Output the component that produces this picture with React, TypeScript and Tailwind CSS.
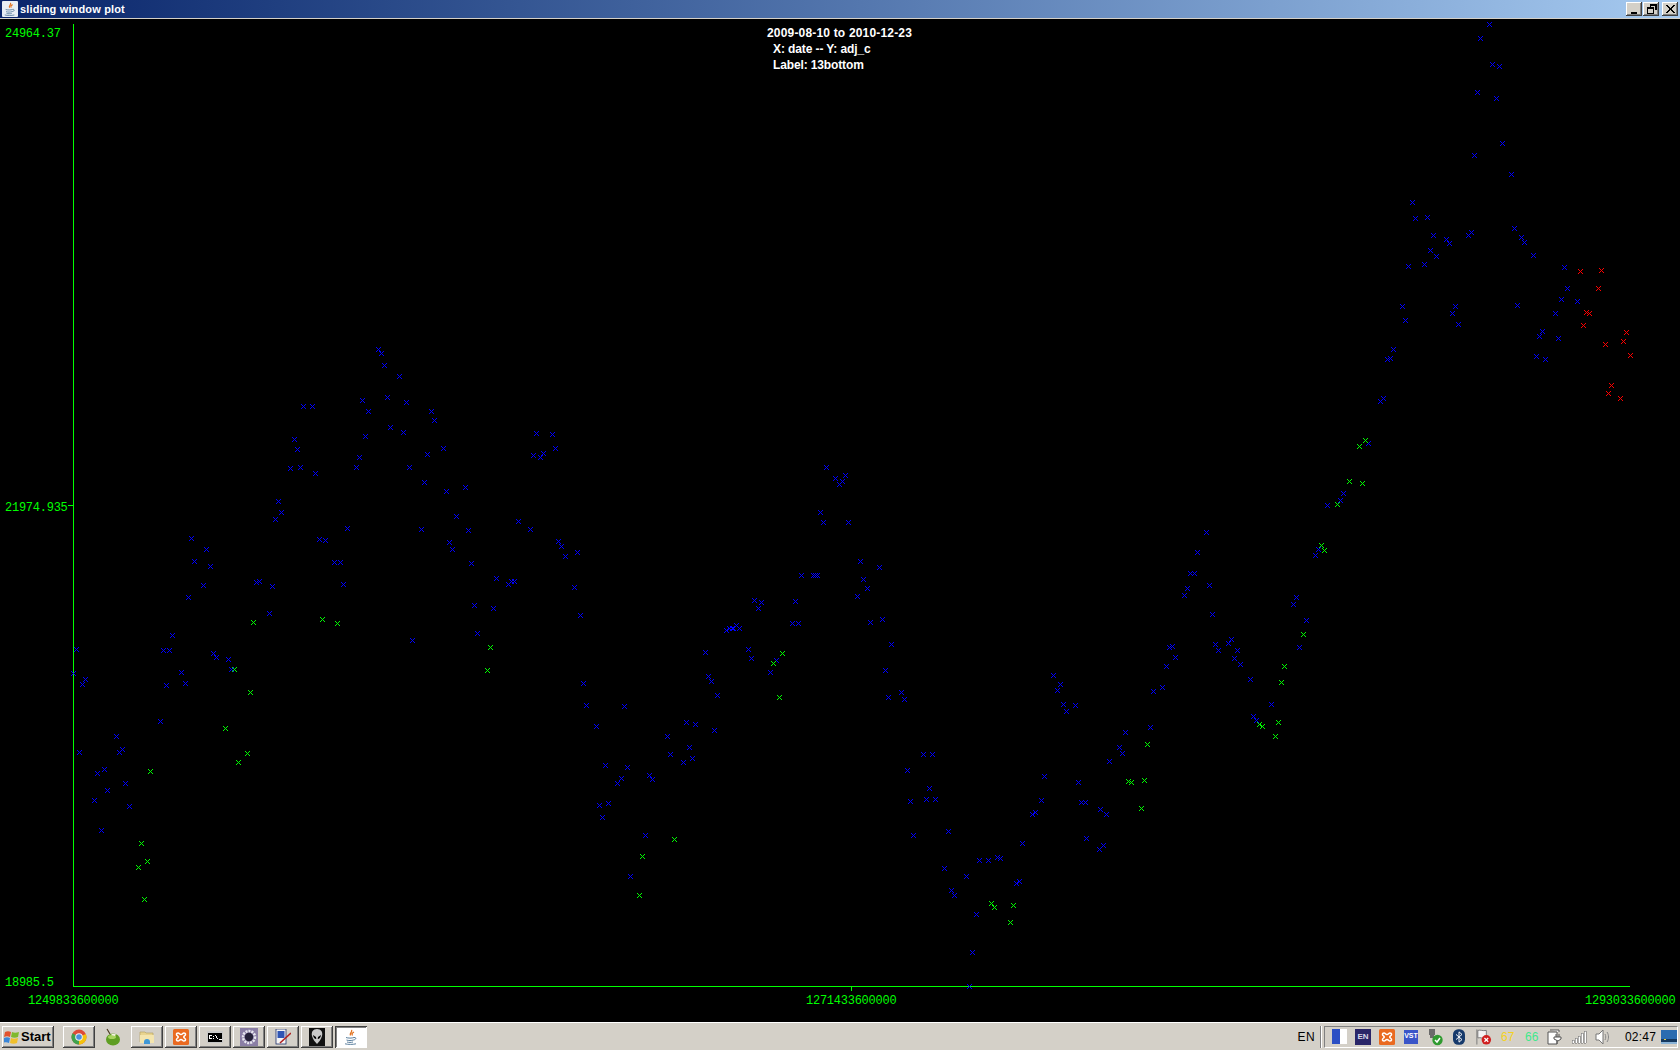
import React from 'react';

type Pt = [number, number];

const mono = "font-['Liberation_Mono',monospace]";
const sans = "font-['Liberation_Sans',Arial,sans-serif]";
const bevel = 'shadow-[inset_-1px_-1px_0_#404040,inset_1px_1px_0_#ffffff,inset_-2px_-2px_0_#808080]';

const xs = (ox: number, oy: number, sy: number, raw: number[]): Pt[] => {
  const out: Pt[] = [];
  for (let i = 0; i < raw.length; i += 2) {
    out.push([Math.floor(ox + raw[i] / 3), Math.floor(oy + raw[i + 1] / sy)]);
  }
  return out;
};

const blue: Pt[] = [
  ...xs(70, 340, 2.703, [
    926,26,935,36,944,69,989,99,878,163,953,155,1010,169,896,193,1085,193,1094,217,962,236,1001,250,887,260,1121,293,869,317,1073,309,860,344,1019,344,1064,384,1130,409,1187,398,701,180,728,180,674,268,683,295,662,347,692,344,737,360,626,436,635,466,617,485,833,509,749,539,767,541,1160,476,1055,512,1196,514,1139,547,1148,566,1346,490,1382,512,1466,545,1475,557,1487,585,1205,604,365,536,410,566,374,599,422,612,794,601,812,601,558,655,569,653,608,666,401,663,356,695,821,660,1280,644,1316,660,1325,652,1334,652,1214,718,1271,725,599,739,1223,793,1028,812,308,798,281,839,299,839,431,848,440,858,476,864,485,890,335,899,347,929,290,934,19,836,10,901,46,918,37,931,272,1031,140,1072,158,1107,149,1115,29,1115,104,1160,83,1172,167,1199,113,1218,74,1244,179,1261,95,1326,1400,253,1448,255,1457,293,1421,307,1391,312,1412,317,
  ]),
  ...xs(570, 450, 2.904, [
    770,50,797,82,827,74,818,92,809,100,752,181,761,210,836,210,872,324,929,341,881,376,893,402,863,425,902,500,938,492,965,564,947,640,956,718,995,704,1004,724,695,364,731,364,737,364,743,364,554,437,575,443,566,460,677,440,668,504,686,504,470,524,479,518,488,518,491,518,500,510,509,518,407,588,536,579,545,605,620,611,602,646,416,657,425,672,443,712,41,678,50,742,164,744,80,802,350,791,377,797,434,814,293,832,359,864,302,884,368,896,341,907,107,916,173,922,239,945,248,957,155,954,143,968,89,1032,116,1026,98,1067,227,1119,182,1238,23,297,14,399,32,480,1061,884,1088,884,1013,930,1079,983,1022,1020,1070,1014,1097,1014,1031,1119,1136,1108,1124,1214,1190,1238,1145,1279,1154,1293,1229,1192,1256,1192,1283,1184,1292,1186,1358,1142,1340,1258,1349,1253,1388,1058,1397,1052,1415,1017,1424,948,1451,654,1472,680,1463,698,1481,739,1490,759,1220,1348,1208,1459,1199,1558,
  ]),
  ...xs(1070, 420, 3, [
    409,338,382,398,361,460,373,460,418,496,352,506,343,526,427,583,298,681,307,680,316,712,289,739,277,802,250,814,16,856,241,922,166,937,148,982,157,1000,118,1024,25,1087,34,1147,46,1147,91,1168,109,1183,436,674,445,691,475,670,484,659,502,691,493,715,511,733,541,778,604,853,550,890,559,901,688,682,709,601,670,553,679,532,736,406,745,388,772,256,811,241,820,220,895,70,
  ]),
  ...xs(1300, 18, 3, [
    568,19,541,61,577,139,598,145,532,223,589,241,607,376,523,412,634,469,337,553,346,601,382,598,400,652,439,664,448,676,505,652,514,643,643,631,664,658,673,673,700,712,391,697,409,715,373,739,325,745,793,748,802,811,784,844,832,850,766,886,652,862,307,865,466,865,457,886,316,907,475,919,727,940,718,955,775,961,280,994,262,1023,271,1021,709,1015,736,1024,250,1141,241,1150,
  ]),
  [1086, 838], [1099, 849], [1103, 845],
];

const green: Pt[] = [
  ...xs(70, 340, 2.703, [551,763,758,755,803,766,1262,831,1253,893,494,890,542,953,467,1050,533,1118,506,1142,242,1166,215,1361,233,1410,206,1426,224,1513]),
  ...xs(570, 450, 2.904, [638,591,611,620,629,718,314,1131,218,1181,209,1294,1265,1317,1274,1328,1331,1322,1322,1372]),
  ...xs(1070, 420, 3, [886,60,868,79,838,184,877,190,802,253,754,376,763,391,700,643,643,739,634,787,625,907,568,913,577,919,616,949,232,973,175,1085,184,1087,223,1081,214,1165]),
];

const red: Pt[] = xs(1300, 18, 3, [841,760,904,757,895,811,859,883,868,886,850,922,979,943,970,970,916,979,991,1012,934,1102,925,1126,961,1141]);

// 5x5 pixel cross, same as the plot's point marker
const crossPath = (pts: Pt[]) => {
  const cells: Pt[] = [[-2,-2],[2,-2],[-1,-1],[1,-1],[0,0],[-1,1],[1,1],[-2,2],[2,2]];
  return pts.map(([x, y]) => cells.map(([a, b]) => `M${x + a} ${y + b}h1v1h-1z`).join('')).join('');
};

const AxisLabel = ({ className, children }: { className: string; children: React.ReactNode }) => (
  <span className={`absolute ${mono} text-[12px] leading-[14px] tracking-[-0.25px] text-[#00ff00] ${className}`}>{children}</span>
);

const Plot = () => (
  <div className="relative flex-1 bg-black overflow-hidden">
    <svg className="absolute left-0 top-0" width={1680} height={1003} viewBox="0 19 1680 1003" shapeRendering="crispEdges">
      <path d="M73 24h1v962h1556v1H73z" fill="#00ff00" />
      <path d="M68 505h5v1h-5zM851 987h1v4h-1z" fill="#00ff00" />
      <path d={crossPath(blue)} fill="#0000ff" />
      <path d={crossPath(green)} fill="#00ff00" />
      <path d={crossPath(red)} fill="#ff0000" />
    </svg>
    <AxisLabel className="left-[5px] top-[8px]">24964.37</AxisLabel>
    <AxisLabel className="left-[5px] top-[482px]">21974.935</AxisLabel>
    <AxisLabel className="left-[5px] top-[957px]">18985.5</AxisLabel>
    <AxisLabel className="left-[28px] top-[975px]">1249833600000</AxisLabel>
    <AxisLabel className="left-[806px] top-[975px]">1271433600000</AxisLabel>
    <AxisLabel className="left-[1585px] top-[975px]">1293033600000</AxisLabel>
    <div className={`absolute left-[767px] top-[6px] ${sans} text-[12px] leading-[16px] text-white font-bold whitespace-pre`}>
      <div className="tracking-[0.18px]">2009-08-10 to 2010-12-23</div>
      <div className="pl-[6px] tracking-[-0.1px]">X: date -- Y: adj_c</div>
      <div className="pl-[6px] tracking-[-0.13px]">Label: 13bottom</div>
    </div>
  </div>
);

const JavaIcon = ({ size = 16 }: { size?: number }) => (
  <svg width={size} height={size} viewBox="0 0 16 16">
    <path d="M8.500 1c1.500 2-2.500 3-1 5.500M11 3c-2 1-2.500 2-1.500 3.500" stroke="#e2711d" strokeWidth="1.300" fill="none" />
    <path d="M3 8.500c2 .8 6 .8 8 0M3.500 11c2 .7 5 .7 7 0M4 13c2 .6 4 .6 6 0M2 14.800c3 .8 8 .8 11 0M11 8.500c2.500-.5 2.500 2-.5 2.500" stroke="#5b7f9e" strokeWidth="1" fill="none" />
  </svg>
);

const TitleBar = () => (
  <div className="h-[19px] shrink-0 border-b border-[#d4d0c8] bg-gradient-to-r from-[#0a246a] to-[#a6caf0] flex items-center pl-[2px] pr-[2px]">
    <div className="w-4 h-4 bg-[#e8edf4] flex items-center justify-center rounded-[1px]">
      <JavaIcon size={14} />
    </div>
    <span className={`ml-[2px] ${sans} text-[11px] leading-none font-bold tracking-[0.15px] text-white`}>sliding window plot</span>
    <div className="ml-auto flex items-center">
      <CaptionButton className="mr-[1px]">
        <path d="M3 9h6v2H3z" fill="#000" />
      </CaptionButton>
      <CaptionButton className="mr-[3px]">
        <path d="M5 1h7v6h-2V3H6v1H5zM2 4h7v7H2zm1 2v4h5V6z" fill="#000" fillRule="evenodd" />
      </CaptionButton>
      <CaptionButton className="">
        <path d="M3 2l3 3 3-3h2L7 6l4 4H9L6 7l-3 3H1l4-4-4-4z" fill="#000" />
      </CaptionButton>
    </div>
  </div>
);

const CaptionButton = ({ className, children }: { className: string; children: React.ReactNode }) => (
  <div className={`w-4 h-[14px] bg-[#d4d0c8] ${bevel} flex items-center justify-center ${className}`}>
    <svg width={13} height={12} viewBox="0 0 13 12" shapeRendering="crispEdges">{children}</svg>
  </div>
);

const TaskButton = ({ children }: { children: React.ReactNode }) => (
  <div className={`w-[32px] h-[22px] bg-[#d4d0c8] ${bevel} flex items-center justify-center`}>{children}</div>
);

const Xampp = () => (
  <svg className="shrink-0" width={16} height={16} viewBox="0 0 16 16">
    <rect width="16" height="16" rx="1.500" fill="#ea6a20" />
    <path d="M5 4c-2 0-2 2-.5 3 1 .5 1 1.500 0 2-1.500 1-1.500 3 .5 3 1.500 0 1.500-1.500 3-1.500s1.500 1.500 3 1.500c2 0 2-2 .5-3-1-.5-1-1.500 0-2 1.500-1 1.500-3-.5-3-1.500 0-1.500 1.500-3 1.500S6.500 4 5 4z" fill="none" stroke="#ffffff" strokeWidth="1.500" />
  </svg>
);

const Chrome = () => (
  <svg width={16} height={16} viewBox="0 0 16 16">
    <circle cx="8" cy="8" r="7.500" fill="#dd4b39" />
    <path d="M8 8L1.500 4.200A7.500 7.500 0 0 0 8 15.500z" fill="#3fa34d" />
    <path d="M8 8l6.900-3A7.500 7.500 0 0 1 8 15.500z" fill="#f4c20d" />
    <circle cx="8" cy="8" r="3.800" fill="#f0f0f0" />
    <circle cx="8" cy="8" r="2.800" fill="#4a8fe0" />
  </svg>
);

const Melon = () => (
  <svg width={16} height={18} viewBox="0 0 16 18">
    <ellipse cx="8" cy="11.500" rx="7" ry="6" fill="#5f9e22" />
    <ellipse cx="7" cy="9" rx="4" ry="2" fill="#a7d45f" />
    <path d="M6 7c1-1.500 3-1.500 5-.5l-1 1.500z" fill="#f4f2e2" />
    <path d="M2 1l3 5" stroke="#4b3a20" strokeWidth="1.200" />
  </svg>
);

const Folder = () => (
  <svg width={16} height={16} viewBox="0 0 16 16">
    <path d="M1 3h5l1 1h7v9H1z" fill="#e9d48e" stroke="#b8a465" strokeWidth=".7" />
    <path d="M1 6h14v8H1z" fill="#f4e5ae" />
    <path d="M5 15v-2a3 3 0 0 1 6 0v2z" fill="#3f97d6" />
  </svg>
);

const Cmd = () => (
  <svg width={16} height={12} viewBox="0 0 16 12" shapeRendering="crispEdges">
    <rect width="16" height="12" fill="#c8c8c8" />
    <rect x="1" y="2" width="14" height="9" fill="#000" />
    <path d="M2 4h3v1H3v2h2v1H2zM6 5h1v1H6zM6 7h1v1H6zM8 4h1v1h1v2h1v1h-1V7H9V5H8zM12 8h3v1h-3z" fill="#fff" />
  </svg>
);

const Gear = () => (
  <svg width={18} height={18} viewBox="0 0 18 18">
    <rect width="18" height="18" fill="#6b5b95" opacity=".7" />
    <circle cx="9" cy="9" r="6" fill="none" stroke="#e8e8f0" strokeWidth="2.500" strokeDasharray="2 1" />
    <circle cx="9" cy="9" r="4.200" fill="#26223a" />
  </svg>
);

const MonitorPen = () => (
  <svg width={16} height={16} viewBox="0 0 16 16">
    <rect x="1" width="10" height="15" fill="#f4f4f4" stroke="#20306a" strokeWidth=".8" />
    <rect x="2.500" y="2" width="7" height="7" fill="#2f55b4" />
    <path d="M16 4L5 14" stroke="#b02020" strokeWidth="1.600" />
  </svg>
);

const Alien = () => (
  <svg width={16} height={18} viewBox="0 0 16 18">
    <rect width="16" height="18" fill="#111" />
    <path d="M8 1c4 0 6 3 5 7-.8 3-3 6-5 8-2-2-4.200-5-5-8-1-4 1-7 5-7z" fill="#c9c9c9" />
    <path d="M4 7l3 2 .3 2c-2 0-3-2-3.300-4zM12 7l-3 2-.3 2c2 0 3-2 3.300-4z" fill="#000" />
  </svg>
);

const WinFlag = () => (
  <svg width={16} height={16} viewBox="0 0 16 16">
    <path d="M1 3c2-1 4-1 6 0l-1 5c-2-1-4-1-6 0z" fill="#e2522e" />
    <path d="M8 3c2 1 4 1 7 0l-1 5c-2 1-5 1-7 0z" fill="#7fb92d" />
    <path d="M0 9c2-1 4-1 6 0l-1 5c-2-1-4-1-6 0z" fill="#3a86d8" />
    <path d="M7 9c2 1 4 1 7 0l-1 5c-2 1-5 1-7 0z" fill="#f1c02b" />
  </svg>
);

const Tray = () => (
  <div className="ml-auto flex items-center h-[22px]">
    <span className={`${sans} text-[12px] tracking-[0.4px] text-black mr-[5px]`}>EN</span>
    <div className="w-[2px] h-[22px] border-l border-[#808080] bg-white mr-[2px]" />
    <div className="w-[354px] h-[22px] border border-t-[#808080] border-l-[#808080] border-b-white border-r-white flex items-center relative">
      <div className="w-[15px] h-[15px] ml-[7px] shrink-0 bg-white flex">
        <div className="w-[8px] bg-[#2b4fc4]" />
      </div>
      <div className="w-[16px] h-[16px] ml-[8px] shrink-0 bg-[#2a2668] flex items-center justify-center">
        <span className={`${sans} text-[8px] font-bold text-[#d8d8e8]`}>EN</span>
      </div>
      <div className="ml-[8px] shrink-0"><Xampp /></div>
      <div className="w-[14px] h-[14px] ml-[9px] shrink-0 bg-[#3a55c8] flex items-center justify-center">
        <span className={`${sans} text-[7px] font-bold text-white`}>VST</span>
      </div>
      <svg className="ml-[9px] shrink-0" width={16} height={18} viewBox="0 0 16 18">
        <path d="M2 1h6v6H7v3H3V7H2z" fill="#6a6a6a" />
        <circle cx="10.500" cy="12" r="5.200" fill="#2f9a2f" />
        <path d="M8 12l2 2 3-4" stroke="#fff" strokeWidth="1.500" fill="none" />
      </svg>
      <svg className="ml-[10px] shrink-0" width={12} height={18} viewBox="0 0 14 18">
        <rect width="14" height="18" rx="6" fill="#163a6b" />
        <path d="M3.500 6l7 6-3.500 3V3l3.500 3-7 6" stroke="#fff" strokeWidth="1.100" fill="none" />
      </svg>
      <svg className="ml-[10px] shrink-0" width={17} height={18} viewBox="0 0 18 18">
        <path d="M2 1v16M3 2c3-1 5 1 9 0v8c-4 1-6-1-9 0z" fill="#f4f4f4" stroke="#777" />
        <circle cx="12" cy="12" r="5" fill="#d02020" />
        <path d="M10 10l4 4m0-4l-4 4" stroke="#fff" strokeWidth="1.300" />
      </svg>
      <span className={`ml-[9px] w-[13px] shrink-0 ${sans} text-[12px] text-[#f4d21f]`}>67</span>
      <span className={`ml-[11px] w-[13px] shrink-0 ${sans} text-[12px] text-[#3fe88c]`}>66</span>
      <svg className="ml-[9px] shrink-0" width={16} height={16} viewBox="0 0 16 16">
        <path d="M1 3h9v12H1zM3 1h9v2" fill="#fff" stroke="#555" />
        <path d="M9 5v3M12 5v3M7 8h7v2l-3 2-4-2zM10 12v3" stroke="#555" fill="#fff" />
      </svg>
      <svg className="ml-[8px] shrink-0" width={16} height={14} viewBox="0 0 16 14" shapeRendering="crispEdges">
        <path d="M1 10h2v3H1zM4 8h2v5H4zM7 6h2v7H7zM10 3h2v10h-2zM13 1h2v12h-2z" fill="#fff" stroke="#777" strokeWidth=".6" />
      </svg>
      <svg className="ml-[8px] shrink-0" width={16} height={16} viewBox="0 0 16 16">
        <path d="M1 5h3l4-4v14l-4-4H1z" fill="#fff" stroke="#777" />
        <path d="M10 5c1 2 1 4 0 6M12 3c2 3 2 7 0 10" stroke="#888" fill="none" />
      </svg>
      <span className={`ml-[14px] shrink-0 ${sans} text-[12px] tracking-[0.2px] text-black`}>02:47</span>
      <svg className="absolute right-[0px] top-[3px]" width={16} height={14} viewBox="0 0 16 14">
        <rect width="16" height="14" fill="#2a6cb0" />
        <rect y="9" width="16" height="3" fill="#14385f" />
        <rect x="3" y="9" width="2" height="1" fill="#e8d040" />
        <rect y="12" width="16" height="2" fill="#8ab4d8" />
      </svg>
    </div>
  </div>
);

const Taskbar = () => (
  <div className="h-[28px] shrink-0 border-t border-white bg-[#d4d0c8] flex items-center pl-[2px] pr-[2px]">
    <div className={`w-[52px] h-[22px] ${bevel} flex items-center pl-[2px]`}>
      <WinFlag />
      <span className={`ml-[1px] ${sans} text-[13px] font-bold text-black`}>Start</span>
    </div>
    <div className="ml-[9px] flex items-center gap-[2px]">
      <TaskButton><Chrome /></TaskButton>
      <div className="w-[32px] h-[22px] flex items-center justify-center"><Melon /></div>
      <TaskButton><Folder /></TaskButton>
      <TaskButton><Xampp /></TaskButton>
      <TaskButton><Cmd /></TaskButton>
      <TaskButton><Gear /></TaskButton>
      <TaskButton><MonitorPen /></TaskButton>
      <TaskButton><Alien /></TaskButton>
      <div className="w-[32px] h-[22px] bg-white shadow-[inset_1px_1px_0_#404040,inset_-1px_-1px_0_#ffffff,inset_2px_2px_0_#808080] flex items-center justify-center">
        <JavaIcon />
      </div>
    </div>
    <Tray />
  </div>
);

export default function App() {
  return (
    <div className="w-[1680px] h-[1050px] flex flex-col overflow-hidden bg-[#d4d0c8]">
      <TitleBar />
      <Plot />
      <Taskbar />
    </div>
  );
}
